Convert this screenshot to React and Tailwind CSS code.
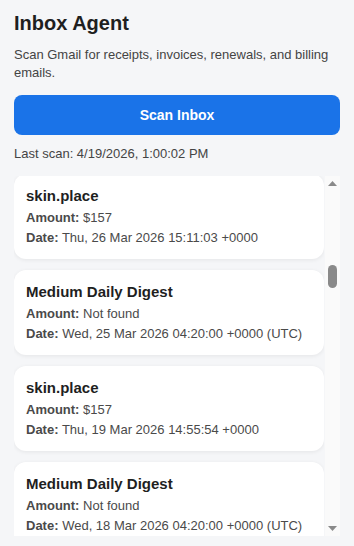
import { useEffect, useRef } from 'react'

const font = { fontFamily: '"Liberation Sans", Arial, sans-serif' }

const base = [
  { from: 'skin.place', amount: '$157', date: 'Thu, 26 Mar 2026 15:11:03 +0000' },
  { from: 'Medium Daily Digest', amount: 'Not found', date: 'Wed, 25 Mar 2026 04:20:00 +0000 (UTC)' },
  { from: 'skin.place', amount: '$157', date: 'Thu, 19 Mar 2026 14:55:54 +0000' },
  { from: 'Medium Daily Digest', amount: 'Not found', date: 'Wed, 18 Mar 2026 04:20:00 +0000 (UTC)' },
]

// 12 earlier results above the visible ones, then the visible ones, then older ones
const emails = Array.from({ length: 54 }, (_, i) => {
  if (i >= 12 && i < 16) return base[i - 12]
  return base[i % 2 === 0 ? 0 : 1]
})

function EmailCard({ email }) {
  return (
    <div className="bg-white rounded-xl shadow-[0_1px_4px_rgba(0,0,0,0.07)] px-3 pt-3 pb-[11px] mb-[11px]">
      <p className="text-[15px] leading-5 font-bold text-[#1f1f1f] mb-[2px]">{email.from}</p>
      <p className="text-[13px] leading-5 text-[#4a4a4a]"><b>Amount:</b> {email.amount}</p>
      <p className="text-[13px] leading-5 text-[#4a4a4a] whitespace-nowrap"><b>Date:</b> {email.date}</p>
    </div>
  )
}

function ScrollBar() {
  return (
    <div className="w-[15px] shrink-0 bg-[#fafafa] flex flex-col">
      <div className="h-[15px] flex items-center justify-center">
        <svg width="9" height="5" viewBox="0 0 9 5"><path d="M0 5 L4.5 0 L9 5 Z" fill="#8a8a8a" /></svg>
      </div>
      <div className="flex-1 pt-[74px]">
        <div className="mx-[3px] h-[23px] rounded-full bg-[#8a8a8a]" />
      </div>
      <div className="h-[15px] flex items-center justify-center">
        <svg width="9" height="5" viewBox="0 0 9 5"><path d="M0 0 L4.5 5 L9 0 Z" fill="#8a8a8a" /></svg>
      </div>
    </div>
  )
}

export default function App() {
  const listRef = useRef(null)

  useEffect(() => {
    if (listRef.current) listRef.current.scrollTop = 1154
  }, [])

  return (
    <div className="min-h-screen bg-[#f5f6f8] px-[14px] pt-[11px]" style={font}>
      <h1 className="text-[20px] leading-6 font-bold text-[#1f1f1f]">Inbox Agent</h1>
      <p className="mt-[11px] text-[13px] leading-[18px] text-[#444]">
        Scan Gmail for receipts, invoices, renewals, and billing emails.
      </p>
      <button className="mt-[13px] w-full h-10 rounded-lg bg-[#1a73e8] text-white text-[14px] font-bold">
        Scan Inbox
      </button>
      <p className="mt-[10px] text-[13px] leading-[18px] text-[#444]">Last scan: 4/19/2026, 1:00:02 PM</p>
      <div className="mt-[13px] h-[360px] flex">
        <div ref={listRef} className="flex-1 mr-px overflow-y-auto [scrollbar-width:none]">
          {emails.map((e, i) => (
            <EmailCard key={i} email={e} />
          ))}
        </div>
        <ScrollBar />
      </div>
    </div>
  )
}
